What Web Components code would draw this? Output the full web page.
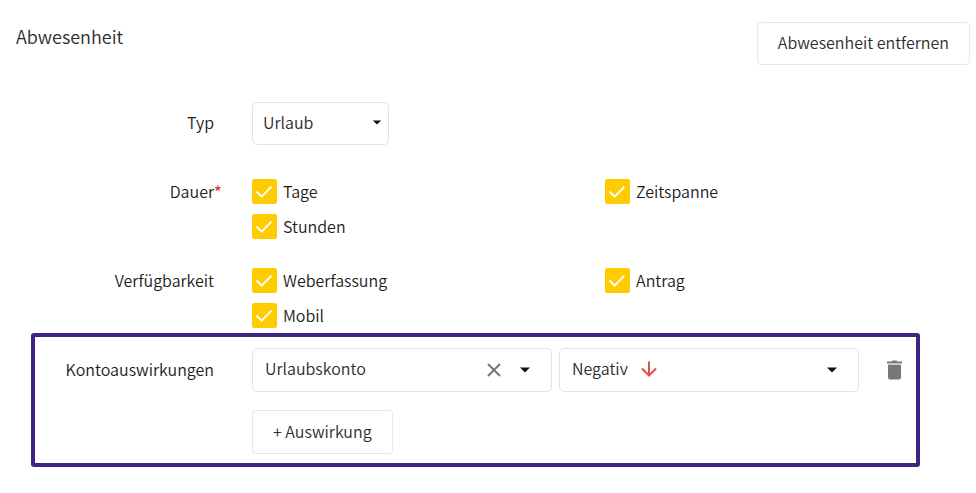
<!DOCTYPE html>
<html lang="de">
<head>
<meta charset="utf-8">
<title>Abwesenheit</title>
<style>
  body { margin: 0; background: #fff; color: #1c1c1c; font: 350 16px/24px "Noto Sans CJK SC", "Noto Sans", sans-serif; }
</style>
</head>
<body>
<absence-form></absence-form>

<template id="form-row-tpl">
  <style>
    :host { display: grid; grid-template-columns: var(--label-width, 214px) minmax(0, 1fr); column-gap: 38px; align-items: start; }
    .label { display: flex; box-sizing: border-box; justify-content: flex-end; align-items: center; height: var(--row-height, 25px); padding-bottom: var(--text-lift, 2px); white-space: nowrap; }
  </style>
  <div class="label"><slot name="label"></slot></div>
  <div><slot></slot></div>
</template>

<template id="check-option-tpl">
  <style>
    :host { display: block; }
    label { display: flex; width: fit-content; align-items: center; gap: 6px; height: 25px; cursor: pointer; }
    .box { display: grid; width: 25px; height: 25px; }
    .text { padding-bottom: 2px; }
    input, svg { grid-area: 1 / 1; margin: 0; width: 25px; height: 25px; }
    input { appearance: none; border: 1px solid #ccc; border-radius: 2px; background: #fff; cursor: pointer; }
    input:checked { border-color: #fc0; background: #fc0; }
    svg { pointer-events: none; fill: none; stroke: #fff; stroke-width: 2; }
    input:not(:checked) + svg { visibility: hidden; }
  </style>
  <label>
    <span class="box"><input type="checkbox" checked><svg viewBox="0 0 25 25" aria-hidden="true"><path d="M4.500 12.500 9.700 17.600 19.500 7.600"/></svg></span>
    <span class="text"><slot></slot></span>
  </label>
</template>

<template id="select-field-tpl">
  <style>
    :host { display: grid; grid-template-columns: minmax(0, 1fr) auto; align-items: center; }
    ::slotted(select) {
      grid-area: 1 / 1 / 2 / 3; box-sizing: border-box; width: 100%; height: var(--field-height, 44px); margin: 0;
      padding: 0 12px 4px; border: 1px solid #e4e4e4; border-radius: 5px; background: transparent;
      appearance: none; font: inherit; color: #2c2c2c;
    }
    .icons { grid-area: 1 / 2; display: flex; align-items: center; gap: 18px; padding-right: var(--caret-space, 21px); padding-bottom: var(--caret-lift, 0); pointer-events: none; }
    .mark { grid-area: 1 / 1; padding-left: 82px; height: 22px; pointer-events: none; }
    .caret { display: block; width: var(--caret-width, 12px); height: var(--caret-height, 6px); fill: #111; }
    ::slotted(button) { pointer-events: auto; }
  </style>
  <slot></slot>
  <span class="mark"><slot name="mark"></slot></span>
  <span class="icons">
    <slot name="action"></slot>
    <svg class="caret" viewBox="0 0 12 6" preserveAspectRatio="none" aria-hidden="true"><path d="M1 .5h10L6 5.500z"/></svg>
  </span>
</template>

<template id="plain-button-tpl">
  <style>
    :host { display: block; width: fit-content; }
    button { display: block; height: var(--field-height, 44px); padding: 0 20px 3px; border: 1px solid #e8e8e8; border-radius: 4px; background: #fff; color: #2c2c2c; font: inherit; white-space: nowrap; cursor: pointer; }
  </style>
  <button type="button"><slot></slot></button>
</template>

<template id="absence-form-tpl">
  <style>
    :host { display: block; }
    header { display: flex; justify-content: space-between; align-items: flex-start; padding: 22px 6px 0 16px; --field-height: 43px; }
    h1 { margin: 1px 0 0; font-size: 18px; line-height: 26px; font-weight: 350; color: #2c2c2c; }
    .type { margin-top: 37px; --row-height: 43px; --field-height: 43px; --caret-space: 7px; --caret-width: 10px; --caret-height: 5px; --caret-lift: 3px; --text-lift: 3px; }
    .type select-field { width: 137px; }
    .type select { padding-left: 10px; }
    .checks { margin-top: 34px; padding-right: 18px; }
    .checks + .checks { margin-top: 29px; }
    .options { display: grid; grid-template-columns: 1fr 1fr; row-gap: 10px; }
    .required { position: relative; }
    .required i { position: absolute; left: 100%; top: 0; color: #d9423e; font-style: normal; font-weight: 500; }
    .effects { margin: 5px 56px 0 31px; padding: 11px 14px 9px 0; border: 4px solid #3f2482; border-radius: 3px; --label-width: 179px; --row-height: 44px; }
    .effect { display: flex; align-items: center; margin-bottom: 18px; }
    .effect select-field { flex: 1; min-width: 0; }
    .effect select-field + select-field { margin-left: 7px; }
    .icon { display: block; padding: 0; border: 0; background: none; cursor: pointer; }
    .icon svg, .arrow { display: block; }
    .trash { margin-left: 28px; }
  </style>
  <header>
    <h1>Abwesenheit</h1>
    <plain-button>Abwesenheit entfernen</plain-button>
  </header>
  <form-row class="type">
    <label slot="label" for="typ">Typ</label>
    <select-field><select id="typ"><option>Urlaub</option></select></select-field>
  </form-row>
  <form-row class="checks">
    <span slot="label" id="dauer" class="required">Dauer<i>*</i></span>
    <div class="options" role="group" aria-labelledby="dauer">
      <check-option>Tage</check-option><check-option>Zeitspanne</check-option><check-option>Stunden</check-option>
    </div>
  </form-row>
  <form-row class="checks">
    <span slot="label" id="verf">Verfügbarkeit</span>
    <div class="options" role="group" aria-labelledby="verf">
      <check-option>Weberfassung</check-option><check-option>Antrag</check-option><check-option>Mobil</check-option>
    </div>
  </form-row>
  <form-row class="effects">
    <label slot="label" for="konto">Kontoauswirkungen</label>
    <div class="effect">
      <select-field>
        <select id="konto"><option>Urlaubskonto</option></select>
        <button slot="action" class="icon" type="button" aria-label="Auswahl löschen"><svg width="14" height="14" viewBox="0 0 14 14" fill="none" stroke="#777" stroke-width="2"><path d="M1 1l12 12M13 1 1 13"/></svg></button>
      </select-field>
      <select-field>
        <select aria-label="Wirkung"><option>Negativ</option></select>
        <svg slot="mark" class="arrow" width="16" height="20" viewBox="0 0 16 20" fill="none" stroke="#e04f4b" stroke-width="2" aria-hidden="true"><path d="M8 2.500v14M1 9.500l7 7 7-7"/></svg>
      </select-field>
      <button class="icon trash" type="button" aria-label="Auswirkung entfernen"><svg width="15" height="20" viewBox="0 0 15 20" fill="#777"><path d="M0 1.500h4.500L5.500.5h4l1 1H15v2H0zM1 5h13v12.500a2 2 0 0 1-2 2H3a2 2 0 0 1-2-2z"/><path d="M1 3.500h13V5H1z" fill="#ccc"/></svg></button>
    </div>
    <plain-button>+ Auswirkung</plain-button>
  </form-row>
</template>

<script>
  const define = (name) => customElements.define(name, class extends HTMLElement {
    constructor() {
      super();
      const content = document.getElementById(name + '-tpl').content;
      this.attachShadow({ mode: 'open' }).append(content.cloneNode(true));
    }
  });
  ['form-row', 'check-option', 'select-field', 'plain-button', 'absence-form'].forEach(define);
</script>
</body>
</html>
